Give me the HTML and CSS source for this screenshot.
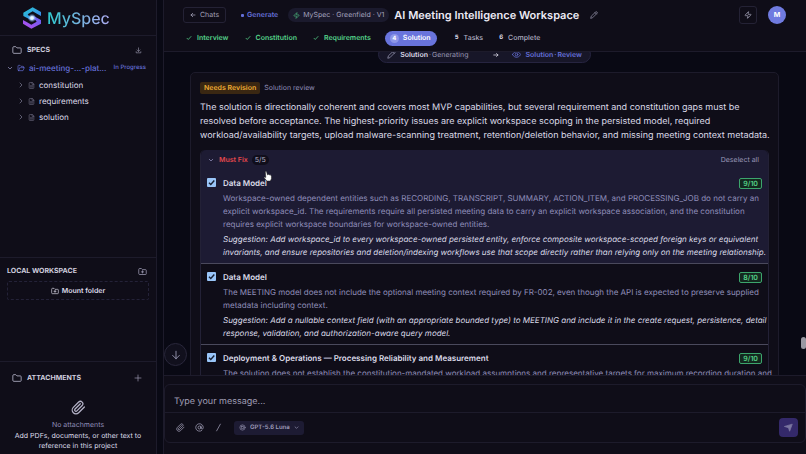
FILE: index.html
```html
<!DOCTYPE html>
<html lang="en">
<head>
<meta charset="utf-8">
<title>MySpec</title>
<link rel="stylesheet" href="styles.css">
</head>
<body>
<svg class="defs" aria-hidden="true">
  <symbol id="folder" viewBox="0 0 24 24"><path d="M2 6a2 2 0 0 1 2-2h5l3 3h8a2 2 0 0 1 2 2v9a2 2 0 0 1-2 2H4a2 2 0 0 1-2-2z"/></symbol>
  <symbol id="folder-open" viewBox="0 0 24 24"><path d="M5 20a2 2 0 0 1-2-2V6a2 2 0 0 1 2-2h4l3 3h6a2 2 0 0 1 2 2v2M5 20h13l4-9H8L5 20"/></symbol>
  <symbol id="folder-plus" viewBox="0 0 24 24"><path d="M2 6a2 2 0 0 1 2-2h5l3 3h8a2 2 0 0 1 2 2v9a2 2 0 0 1-2 2H4a2 2 0 0 1-2-2zM12 10v6M9 13h6"/></symbol>
  <symbol id="file" viewBox="0 0 24 24"><path d="M14 2H6a2 2 0 0 0-2 2v16a2 2 0 0 0 2 2h12a2 2 0 0 0 2-2V8zM14 2v6h6M8 13h8M8 17h8"/></symbol>
  <symbol id="download" viewBox="0 0 24 24"><path d="M12 3v12M7 10l5 5 5-5M4 16v4h16v-4"/></symbol>
  <symbol id="down" viewBox="0 0 24 24"><path d="M5 9l7 7 7-7"/></symbol>
  <symbol id="right" viewBox="0 0 24 24"><path d="M8 4l8 8-8 8"/></symbol>
  <symbol id="plus" viewBox="0 0 24 24"><path d="M12 3v18M3 12h18"/></symbol>
  <symbol id="clip" viewBox="0 0 24 24"><path d="M21.4 11.1l-9.2 9.2a6 6 0 0 1-8.5-8.5l8.6-8.6a4 4 0 0 1 5.6 5.7l-8.5 8.5a2 2 0 0 1-2.9-2.9l8.5-8.4"/></symbol>
  <symbol id="arrow-left" viewBox="0 0 24 24"><path d="M20 12H4M11 5l-7 7 7 7"/></symbol>
  <symbol id="arrow-right" viewBox="0 0 24 24"><path d="M3 12h17M14 6l6 6-6 6"/></symbol>
  <symbol id="arrow-down" viewBox="0 0 24 24"><path d="M12 3v18M4 13l8 8 8-8"/></symbol>
  <symbol id="zap" viewBox="0 0 24 24"><path d="M4 14a1 1 0 0 1-.8-1.6l9.9-10.2a.5.5 0 0 1 .9.5L12 8.700a1 1 0 0 0 1 1.300h7a1 1 0 0 1 .8 1.600l-9.900 10.200a.5.5 0 0 1-.9-.5l2-6a1 1 0 0 0-1-1.300z"/></symbol>
  <symbol id="pencil" viewBox="0 0 24 24"><path d="M17 3a2.800 2.800 0 0 1 4 4L7.500 20.500 2 22l1.500-5.500zM15 5l4 4"/></symbol>
  <symbol id="eye" viewBox="0 0 24 24"><path d="M1 12s4-7.500 11-7.500S23 12 23 12s-4 7.500-11 7.500S1 12 1 12z"/><circle cx="12" cy="12" r="3.500"/></symbol>
  <symbol id="check" viewBox="0 0 24 24"><path d="M4 13l5 5L20 6"/></symbol>
  <symbol id="at" viewBox="0 0 24 24"><circle cx="12" cy="12" r="4"/><path d="M16 8v5a3 3 0 0 0 6 0v-1a10 10 0 1 0-4 8"/></symbol>
  <symbol id="slash" viewBox="0 0 24 24"><path d="M17 3L7 21"/></symbol>
  <symbol id="orb" viewBox="0 0 24 24"><circle cx="12" cy="12" r="9"/><rect x="8" y="8" width="8" height="8" rx="2"/></symbol>
  <symbol id="send" viewBox="0 0 24 24"><path fill="currentColor" d="M2 9L22 3l-7 19-3-9z"/></symbol>
</svg>

<div class="app">
  <aside class="sidebar">
    <a class="brand" href="#">
      <svg class="brand-mark" viewBox="0 0 60 66" aria-hidden="true">
        <defs>
          <linearGradient id="ga" x1="0" y1="0" x2="1" y2="1"><stop offset="0" stop-color="#27c9d2"/><stop offset="1" stop-color="#3f7df0"/></linearGradient>
          <linearGradient id="gb" x1="1" y1="0" x2="0" y2="1"><stop offset="0" stop-color="#5f63ee"/><stop offset="1" stop-color="#b94df0"/></linearGradient>
          <radialGradient id="gc"><stop offset="0" stop-color="#fff"/><stop offset=".35" stop-color="#d3ebff"/><stop offset="1" stop-color="#6aa8ff" stop-opacity="0"/></radialGradient>
        </defs>
        <path fill="url(#ga)" d="M32 1l25 14v12L46 21l-14-8-15 9 4 5 14 7-8 5L4 27V17z"/>
        <path fill="url(#gb)" d="M28 65L3 50V39l11 6 14 8 16-9-4-5-14-7 8-6 23 13v11z"/>
        <circle cx="30" cy="33" r="13" fill="url(#gc)"/>
      </svg>
      <span class="brand-name">MySpec</span>
    </a>

    <section class="panel specs">
      <div class="panel-head">
        <svg class="icon i10"><use href="#folder"/></svg>
        <h2>SPECS</h2>
        <button class="bare push" aria-label="Download specs"><svg class="icon i7"><use href="#download"/></svg></button>
      </div>
      <button class="tree-root">
        <svg class="icon i6"><use href="#down"/></svg>
        <svg class="icon i8"><use href="#folder-open"/></svg>
        <span class="tree-name">ai-meeting-...-plat...</span>
        <span class="tree-state">In Progress</span>
      </button>
      <ul class="tree">
        <li><button class="tree-item"><svg class="icon i6"><use href="#right"/></svg><svg class="icon i7"><use href="#file"/></svg>constitution</button></li>
        <li><button class="tree-item"><svg class="icon i6"><use href="#right"/></svg><svg class="icon i7"><use href="#file"/></svg>requirements</button></li>
        <li><button class="tree-item"><svg class="icon i6"><use href="#right"/></svg><svg class="icon i7"><use href="#file"/></svg>solution</button></li>
      </ul>
    </section>

    <section class="panel local">
      <div class="local-head">
        <h2>LOCAL WORKSPACE</h2>
        <button class="bare push" aria-label="Add folder"><svg class="icon i9"><use href="#folder-plus"/></svg></button>
      </div>
      <button class="mount"><svg class="icon i8"><use href="#folder-plus"/></svg>Mount folder</button>
    </section>

    <section class="panel attachments">
      <div class="panel-head">
        <svg class="icon i10"><use href="#folder"/></svg>
        <h2>ATTACHMENTS</h2>
        <button class="bare push" aria-label="Add attachment"><svg class="icon i8"><use href="#plus"/></svg></button>
      </div>
      <div class="empty">
        <svg class="icon i15"><use href="#clip"/></svg>
        <p class="empty-title">No attachments</p>
        <p class="empty-text">Add PDFs, documents, or other text to reference in this project</p>
      </div>
    </section>
  </aside>

  <main class="main">
    <header class="topbar">
      <div class="title-row">
        <button class="chats"><svg class="icon i6"><use href="#arrow-left"/></svg>Chats</button>
        <span class="mode">Generate</span>
        <span class="project"><svg class="icon i7 green"><use href="#zap"/></svg>MySpec · Greenfield · V1</span>
        <h1>AI Meeting Intelligence Workspace</h1>
        <button class="bare rename" aria-label="Rename"><svg class="icon i8"><use href="#pencil"/></svg></button>
        <button class="square push" aria-label="Quick actions"><svg class="icon i8"><use href="#zap"/></svg></button>
        <button class="avatar" aria-label="Account">M</button>
      </div>
      <nav class="steps" aria-label="Progress">
        <a class="step done" href="#"><svg class="icon i6"><use href="#check"/></svg>Interview</a>
        <a class="step done" href="#"><svg class="icon i6"><use href="#check"/></svg>Constitution</a>
        <a class="step done" href="#"><svg class="icon i6"><use href="#check"/></svg>Requirements</a>
        <a class="step current" href="#" aria-current="step"><span class="num">4</span>Solution</a>
        <a class="step" href="#"><span class="num">5</span>Tasks</a>
        <a class="step" href="#"><span class="num">6</span>Complete</a>
      </nav>
    </header>

    <div class="scroll">
      <div class="phase">
        <svg class="icon i9"><use href="#pencil"/></svg>
        <span class="phase-name"><b>Solution</b><span>·</span><span>Generating</span></span>
        <svg class="icon i6 phase-arrow"><use href="#arrow-right"/></svg>
        <svg class="icon i9 accent"><use href="#eye"/></svg>
        <span class="phase-name accent"><span>Solution</span><span>·</span><span>Review</span></span>
      </div>

      <article class="card">
        <div class="card-head"><span class="tag">Needs Revision</span><span class="muted">Solution review</span></div>
        <p class="summary">The solution is directionally coherent and covers most MVP capabilities, but several requirement and constitution gaps must be resolved before acceptance. The highest-priority issues are explicit workspace scoping in the persisted model, required workload/availability targets, upload malware-scanning treatment, retention/deletion behavior, and missing meeting context metadata.</p>

        <section class="issues">
          <div class="lead">
            <div class="issues-head">
              <button class="bare group"><svg class="icon i6"><use href="#down"/></svg>Must Fix</button>
              <span class="count">5/5</span>
              <button class="bare deselect push">Deselect all</button>
            </div>
            <svg class="pointer" viewBox="0 0 16 20" aria-hidden="true"><path d="M4 2q1.500-1 2.500 1L8 8l1.500-1L11 8l1.500-.5L14 9l1 1v5l-2 4H7l-5-6q0-2 3-.5z"/></svg>
            <div class="issue">
              <input type="checkbox" id="i1" checked>
              <label for="i1">Data Model</label>
              <span class="score">9/10</span>
              <p class="detail">Workspace-owned dependent entities such as RECORDING, TRANSCRIPT, SUMMARY, ACTION_ITEM, and PROCESSING_JOB do not carry an explicit workspace_id. The requirements require all persisted meeting data to carry an explicit workspace association, and the constitution requires explicit workspace boundaries for workspace-owned entities.</p>
              <p class="suggest">Suggestion: Add workspace_id to every workspace-owned persisted entity, enforce composite workspace-scoped foreign keys or equivalent invariants, and ensure repositories and deletion/indexing workflows use that scope directly rather than relying only on the meeting relationship.</p>
            </div>
          </div>
          <div class="issue">
            <input type="checkbox" id="i2" checked>
            <label for="i2">Data Model</label>
            <span class="score">8/10</span>
            <p class="detail">The MEETING model does not include the optional meeting context required by FR-002, even though the API is expected to preserve supplied metadata including context.</p>
            <p class="suggest">Suggestion: Add a nullable context field (with an appropriate bounded type) to MEETING and include it in the create request, persistence, detail response, validation, and authorization-aware query model.</p>
          </div>
          <div class="issue">
            <input type="checkbox" id="i3" checked>
            <label for="i3">Deployment &amp; Operations — Processing Reliability and Measurement</label>
            <span class="score">9/10</span>
            <p class="detail">The solution does not establish the constitution-mandated workload assumptions and representative targets for maximum recording duration and</p>
          </div>
        </section>
      </article>
      <button class="to-end" aria-label="Scroll to latest"><svg class="icon i10"><use href="#arrow-down"/></svg></button>
      <div class="thumb"></div>
    </div>

    <footer class="footer">
      <form class="composer">
        <textarea rows="1" aria-label="Message" placeholder="Type your message..."></textarea>
        <div class="tools">
          <button type="button" class="bare" aria-label="Attach"><svg class="icon i9"><use href="#clip"/></svg></button>
          <button type="button" class="bare" aria-label="Mention"><svg class="icon i9"><use href="#at"/></svg></button>
          <button type="button" class="bare" aria-label="Command"><svg class="icon i9"><use href="#slash"/></svg></button>
          <div class="model">
            <svg class="icon i7"><use href="#orb"/></svg>
            <select aria-label="Model"><option>GPT-5.6 Luna</option></select>
            <svg class="icon i5"><use href="#down"/></svg>
          </div>
          <button class="send push" aria-label="Send"><svg class="icon i9"><use href="#send"/></svg></button>
        </div>
      </form>
    </footer>
  </main>
</div>
</body>
</html>
```
FILE: styles.css
```css
* { box-sizing: border-box; }
:root {
  --panel: #0f0d18;
  --deep: #090914;
  --line: #1d1b2b;
  --text: #dcdbe8;
  --muted: #8f8db9;
  --accent: #6570d8;
  --green: #55d38a;
}
body {
  margin: 0;
  background: var(--deep);
  color: var(--text);
  font: 7px/12px Inter, "Liberation Sans", sans-serif;
  text-rendering: geometricPrecision;
}
h1, h2, p, ul { margin: 0; padding: 0; }
ul { list-style: none; }
a { color: inherit; text-decoration: none; }
button, select, textarea { font: inherit; color: inherit; background: none; border: 0; padding: 0; margin: 0; text-rendering: inherit; }
button { display: flex; align-items: center; }
.defs { position: absolute; width: 0; height: 0; }
.icon { flex: none; fill: none; stroke: currentColor; stroke-width: 2; stroke-linecap: round; stroke-linejoin: round; }
.i5 { width: 5px; height: 5px; stroke-width: 3; }
.i6 { width: 6px; height: 6px; stroke-width: 3; }
.i7 { width: 7px; height: 7px; }
.i8 { width: 8px; height: 8px; }
.i9 { width: 9px; height: 9px; }
.i10 { width: 10px; height: 10px; }
.i15 { width: 15px; height: 15px; }
.push { margin-left: auto; }
.green { color: var(--green); }
.accent { color: var(--accent); font-weight: 600; }

.app { display: grid; grid-template-columns: 157px minmax(0, 1fr); grid-template-rows: minmax(0, 1fr); gap: 6px; height: 100vh; overflow: hidden; }

.sidebar { display: flex; flex-direction: column; background: var(--panel); border-right: 1px solid var(--line); }
.brand { display: flex; align-items: center; gap: 5px; height: 35px; padding-left: 22px; }
.brand-mark { width: 20px; height: 22px; }
.brand-name {
  font-size: 16px; line-height: 24px; font-weight: 500;
  background: linear-gradient(90deg, #2ccbd0, #6db4dc 45%, #b0adf4);
  background-clip: text; color: transparent;
}
.panel { border-top: 1px solid var(--line); }
.specs { flex: 1; padding-top: 6px; }
.local { height: 104px; padding: 6px 7px; }
.attachments { height: 93px; padding-top: 8px; }
.panel-head { display: flex; align-items: center; gap: 5px; height: 16px; padding: 0 14px 0 12px; color: #b5b3c8; }
h2 { font-size: 7px; line-height: 12px; font-weight: 700; color: #cfcddf; }
.tree-root { width: 100%; height: 19px; padding: 0 10px 0 7px; gap: 4px; color: var(--accent); }
.tree-root .i6 { color: var(--muted); }
.tree-name { font-size: 8px; font-weight: 500; }
.tree-state { margin-left: auto; font-size: 6px; font-weight: 500; }
.tree-item { height: 16px; padding-left: 18px; gap: 4px; font-size: 8px; }
.tree-item .icon { color: #77758c; }
.local-head { display: flex; align-items: center; height: 14px; padding-right: 2px; }
.mount { width: 100%; height: 19px; margin-top: 3px; justify-content: center; gap: 3px; border: 1px dashed #242238; border-radius: 2px; font-weight: 600; }
.empty { display: flex; flex-direction: column; align-items: center; padding: 14px 12px 0; text-align: center; color: #b5b3c8; }
.empty-title { margin-top: 4px; color: var(--muted); }
.empty-text { line-height: 10px; color: var(--text); }

.main { display: flex; flex-direction: column; min-width: 0; border-left: 1px solid var(--line); }
.topbar { flex: none; height: 52px; padding-top: 5px; background: var(--panel); border-bottom: 1px solid var(--line); }
.title-row { display: flex; align-items: center; height: 20px; padding: 0 20px 0 19px; }
.chats { height: 16px; padding: 0 6px; gap: 4px; border: 1px solid #242235; border-radius: 3px; color: #a5a3b8; }
.mode { display: flex; align-items: center; gap: 3px; margin-left: 15px; color: var(--accent); font-weight: 600; }
.mode::before { content: ""; width: 3px; height: 3px; border-radius: 1px; background: currentColor; }
.project { display: flex; align-items: center; gap: 3px; height: 14px; margin-left: 10px; padding: 0 5px; border-radius: 7px; background: #1b1a2d; color: #a5a3be; }
h1 { margin-left: 5px; font-size: 11px; line-height: 16px; font-weight: 600; color: #eceaf5; }
.bare { color: #a09eb5; }
.rename { margin-left: 11px; }
.square { width: 18px; height: 18px; justify-content: center; border: 1px solid #242235; border-radius: 3px; color: #b5b3c8; }
.avatar { width: 18px; height: 18px; margin-left: 11px; justify-content: center; border-radius: 9px; background: #707be0; color: #fff; font-weight: 700; }
.steps { display: flex; align-items: center; height: 14px; margin-top: 6px; padding-left: 22px; gap: 16px; }
.step { display: flex; align-items: center; gap: 5px; color: #b1afc3; font-weight: 500; }
.done { color: var(--green); font-weight: 600; }
.num { width: 9px; font-size: 6px; font-weight: 700; text-align: center; color: var(--text); }
.step:not(.current) .num { width: 4px; }
.current { height: 15px; gap: 4px; margin: 0 2px 0 -2px; padding: 0 6px 0 5px; border-radius: 8px; background: #6974dc; color: #fff; font-weight: 600; }
.current .num { height: 9px; line-height: 9px; border-radius: 5px; background: #8d96e8; color: #fff; }

.scroll { position: relative; flex: 1; min-height: 0; overflow: hidden; padding: 0 27px 0 26px; }
.phase { display: flex; align-items: center; gap: 4px; width: max-content; height: 17px; margin: -6px auto 0; padding: 0 8px; border: 1px solid #262440; border-radius: 9px; background: #171628; color: #9a98b3; }
.phase-name { display: flex; gap: 1px; }
.phase b { font-weight: 600; color: var(--text); }
.phase-arrow { margin: 0 9px 0 21px; color: var(--text); }
.card { margin-top: 9px; padding: 9px; border: 1px solid var(--line); border-radius: 5px; background: var(--panel); }
.card-head { display: flex; align-items: center; gap: 4px; height: 12px; }
.tag { padding: 0 4px; border-radius: 2px; background: #3a2712; color: #f0ad33; font-weight: 600; }
.muted { color: var(--muted); }
.summary { margin: 7px -4px 0 0; font-size: 9px; line-height: 14px; }
.issues { margin-top: 7px; border: solid #232136; border-width: 0 1px; border-radius: 5px; }
.lead { position: relative; border-radius: 5px 5px 0 0; background: #1d1b33; }
.issues-head { display: flex; align-items: center; height: 20px; padding: 0 9px 0 7px; gap: 4px; }
.group { gap: 5px; color: #e5484d; font-weight: 600; }
.group .icon { color: var(--muted); }
.count { padding: 0 3px; border-radius: 5px; line-height: 10px; background: #100e1b; color: #b5b3c8; }
.deselect { color: #9a98b8; }
.pointer { position: absolute; left: 62px; top: 20px; width: 9px; height: 12px; fill: #fff; stroke: #222; stroke-width: 1; }
.issue { display: grid; grid-template-columns: 9px minmax(0, 1fr) auto; column-gap: 7px; padding: 7px 6px 4px; border-bottom: 1px solid #4a495c; }
.issue input { appearance: none; width: 9px; height: 9px; margin: 1px 0 0; border-radius: 1px; background: #99c5f8 url("data:image/svg+xml,%3Csvg xmlns='http://www.w3.org/2000/svg' viewBox='0 0 9 9'%3E%3Cpath d='M2 4.700l1.800 1.800L7.300 2.500' fill='none' stroke='%23182033' stroke-width='1.400'/%3E%3C/svg%3E"); }
.issue label { font-size: 8px; font-weight: 600; }
.score { height: 11px; margin-top: 1px; padding: 0 3px; border: 1px solid #3ca56c; border-radius: 2px; line-height: 9px; color: var(--green); background: #14281f; font-weight: 600; }
.detail, .suggest { grid-column: 2 / 4; margin-right: -10px; font-size: 8px; line-height: 13px; }
.detail { margin-top: 3px; color: var(--muted); }
.suggest { margin-top: 2px; font-style: italic; }
.to-end { position: absolute; left: 0; bottom: 9px; width: 23px; height: 23px; justify-content: center; border: 1px solid #29273b; border-radius: 12px; background: #11101d; color: #a5a3c0; }
.thumb { position: absolute; right: 0; bottom: 26px; width: 5px; height: 12px; border-radius: 3px; background: #9a99a3; }

.footer { flex: none; height: 79px; padding-top: 8px; background: var(--panel); border-top: 1px solid var(--line); }
.composer { border: 1px solid var(--line); border-radius: 6px; }
.composer textarea { display: block; width: 100%; height: 27px; padding: 11px 9px 4px; line-height: 12px; font-size: 9px; resize: none; outline: 0; }
.composer textarea::placeholder { color: #a09eb5; opacity: 1; }
.tools { display: flex; align-items: center; gap: 10px; height: 30px; padding: 0 7px 0 11px; border-top: 1px solid var(--line); }
.model { display: flex; align-items: center; gap: 4px; height: 14px; margin-left: 1px; padding: 0 5px; border-radius: 3px; background: #1d1b33; color: #a09ebb; font-size: 6px; font-weight: 600; }
.model select { appearance: none; }
.send { width: 19px; height: 19px; justify-content: center; border-radius: 4px; background: #34296a; color: #7b76a0; }
```
